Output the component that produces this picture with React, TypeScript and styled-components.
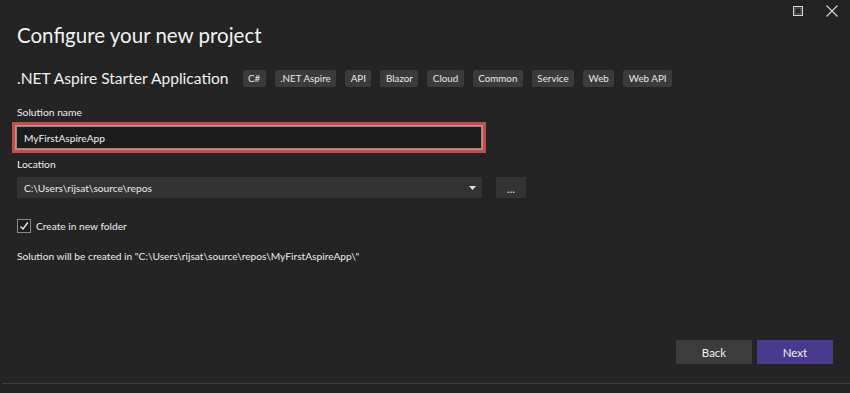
import React from "react";
import styled, { createGlobalStyle } from "styled-components";

const Global = createGlobalStyle`
  html, body { margin: 0; padding: 0; background: #242424; }
  body { font-family: Lato, "Open Sans", sans-serif; color: #f0f0f0; }
  * { box-sizing: border-box; }
`;

const Window = styled.div`
  width: 850px;
  height: 393px;
  background: #242424;
  display: flex;
  flex-direction: column;
  position: relative;
  overflow: hidden;
`;

const TitleBar = styled.div`
  height: 18px;
  display: flex;
  justify-content: flex-end;
  align-items: center;
  gap: 20px;
  padding: 0 11px 0 0;
  margin-top: 2px;
`;

const WinBtn = styled.div`
  width: 14px;
  height: 14px;
  display: flex;
  align-items: center;
  justify-content: center;
`;

const Content = styled.div`
  flex: 1;
  display: flex;
  flex-direction: column;
  padding: 0 17px;
`;

const Title = styled.h1`
  margin: 1px 0 0 0;
  font-size: 20.5px;
  font-weight: 400;
  line-height: 28px;
  color: #f2f2f2;
`;

const SubRow = styled.div`
  display: flex;
  align-items: center;
  margin-top: 19px;
  height: 20px;
`;

const SubTitle = styled.div`
  font-size: 15.6px;
  color: #f0f0f0;
  margin-right: 14px;
`;

const Tags = styled.div`
  display: flex;
  gap: 9px;
`;

const Tag = styled.span`
  background: #3b3b3b;
  color: #e8e8e8;
  font-size: 9.8px;
  height: 17px;
  line-height: 17px;
  padding: 0 5.5px;
  border-radius: 2px;
`;

const Label = styled.div<{ $top: number }>`
  font-size: 10.3px;
  color: #efefef;
  margin-top: ${(p) => p.$top}px;
  line-height: 15px;
`;

const Highlight = styled.div`
  margin: 2px 0 0 -5px;
  width: 474px;
  height: 31px;
  border: 3px solid #c0504d;
  box-shadow: inset 0 0 0 1px #d98583;
  padding: 1px;
  display: flex;
`;

const TextInput = styled.div`
  flex: 1;
  background: #1c1c1c;
  border: 1px solid #8d8d8d;
  font-size: 10.2px;
  color: #f0f0f0;
  display: flex;
  align-items: center;
  padding-left: 7px;
`;

const LocationRow = styled.div`
  display: flex;
  align-items: center;
  gap: 14px;
  margin-top: 5px;
`;

const Select = styled.div`
  width: 465px;
  height: 21px;
  background: #333333;
  display: flex;
  align-items: center;
  justify-content: space-between;
  padding: 0 6px 0 7px;
  font-size: 10.2px;
  color: #ececec;
`;

const DotsButton = styled.div`
  width: 30px;
  height: 21px;
  background: #333333;
  display: flex;
  align-items: flex-end;
  justify-content: center;
  padding-bottom: 5px;
  font-size: 11px;
  color: #e0e0e0;
  line-height: 8px;
`;

const CheckRow = styled.div`
  display: flex;
  align-items: center;
  gap: 5px;
  margin-top: 21px;
  font-size: 10.2px;
  color: #efefef;
`;

const CheckBox = styled.div`
  width: 14px;
  height: 14px;
  border: 1px solid #8a8a8a;
  background: #1e1e1e;
  display: flex;
  align-items: center;
  justify-content: center;
`;

const Info = styled.div`
  margin-top: 17px;
  font-size: 10.2px;
  color: #ececec;
`;

const Footer = styled.div`
  display: flex;
  justify-content: flex-end;
  gap: 5px;
  padding: 0 17px 0 0;
  margin-top: auto;
  margin-bottom: 19px;
`;

const Button = styled.div<{ $primary?: boolean }>`
  width: 76px;
  height: 24px;
  background: ${(p) => (p.$primary ? "#4a3a8e" : "#3c3c3c")};
  color: #f2f2f2;
  font-size: 11.5px;
  display: flex;
  align-items: center;
  justify-content: center;
`;

const BottomLine = styled.div`
  height: 1px;
  background: #3d3d3d;
  margin: 0 0 9px 2px;
`;

const tags = ["C#", ".NET Aspire", "API", "Blazor", "Cloud", "Common", "Service", "Web", "Web API"];

export default function App() {
  return (
    <Window>
      <Global />
      <TitleBar>
        <WinBtn>
          <svg width="10" height="10" viewBox="0 0 10 10">
            <rect x="0.5" y="0.5" width="9" height="9" fill="none" stroke="#d8d8d8" strokeWidth="1" />
            <rect x="2" y="2" width="6" height="6" fill="none" stroke="#d8d8d8" strokeWidth="0.6" opacity="0.6" />
          </svg>
        </WinBtn>
        <WinBtn>
          <svg width="12" height="12" viewBox="0 0 12 12">
            <path d="M0.5 0.5 L11.5 11.5 M11.5 0.5 L0.5 11.5" stroke="#d8d8d8" strokeWidth="1.1" />
          </svg>
        </WinBtn>
      </TitleBar>
      <Content>
        <Title>Configure your new project</Title>
        <SubRow>
          <SubTitle>.NET Aspire Starter Application</SubTitle>
          <Tags>
            {tags.map((t) => (
              <Tag key={t}>{t}</Tag>
            ))}
          </Tags>
        </SubRow>
        <Label $top={17}>Solution name</Label>
        <Highlight>
          <TextInput>MyFirstAspireApp</TextInput>
        </Highlight>
        <Label $top={4}>Location</Label>
        <LocationRow>
          <Select>
            <span>C:\Users\rijsat\source\repos</span>
            <svg width="7" height="4" viewBox="0 0 7 4">
              <path d="M0 0 H7 L3.5 4 Z" fill="#e0e0e0" />
            </svg>
          </Select>
          <DotsButton>...</DotsButton>
        </LocationRow>
        <CheckRow>
          <CheckBox>
            <svg width="10" height="10" viewBox="0 0 10 10">
              <path d="M1.5 5.5 L4 8 L8.8 1.5" fill="none" stroke="#f0f0f0" strokeWidth="1.3" />
            </svg>
          </CheckBox>
          <span>Create in new folder</span>
        </CheckRow>
        <Info>Solution will be created in "C:\Users\rijsat\source\repos\MyFirstAspireApp\"</Info>
      </Content>
      <Footer>
        <Button>Back</Button>
        <Button $primary>Next</Button>
      </Footer>
      <BottomLine />
    </Window>
  );
}
